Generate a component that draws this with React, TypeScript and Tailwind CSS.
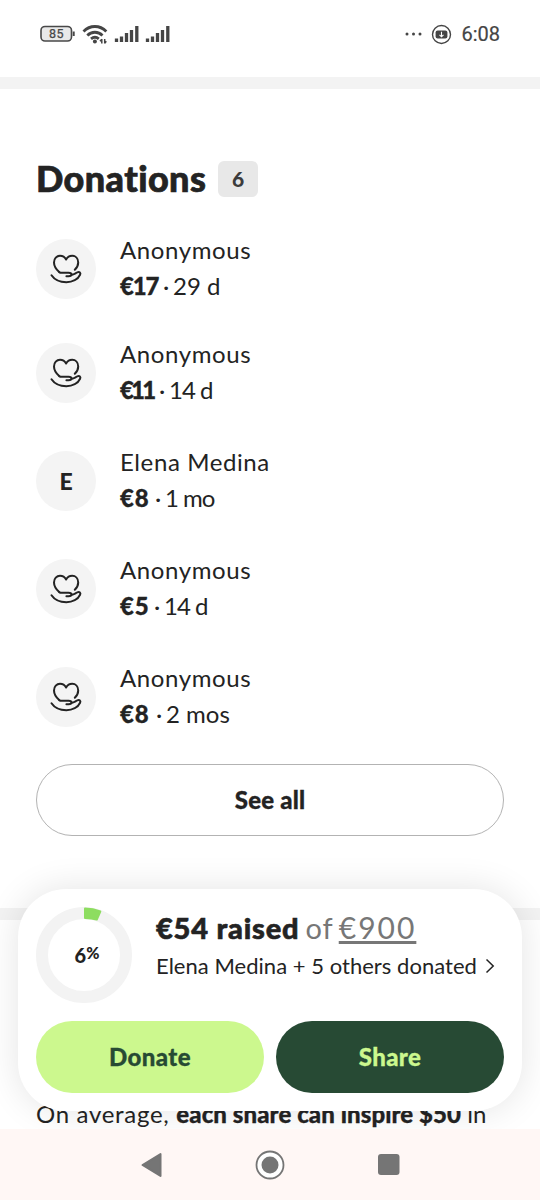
import type { ReactNode } from 'react';

function HeartHand() {
  return (
    <svg width="34" height="34" viewBox="0 0 34 34" fill="none" stroke="#232323" strokeWidth="2" strokeLinecap="round" strokeLinejoin="round">
      <path d="M10.4 20.2C7 17.2 5 13.8 5 10.4C5 6.5 7.700 3.800 11 3.800C13.700 3.800 15.800 5.100 17.100 7.500C18.400 5.100 20.500 3.800 23.200 3.800C26.600 3.800 29.200 6.500 29.200 10.400C29.200 13 28 15.600 25.800 17.800" />
      <path d="M10.400 20.200C11.300 21 12.500 20.800 14 20.800H19.500C21.400 20.800 22.500 21.200 22.500 22.500C22.500 23.900 21.300 24.300 19.500 24.300H17.400" />
      <path d="M22.800 22.800C24.800 22.500 26.500 21.200 28.300 20.400C30.500 19.300 32 20.900 31.100 22.800C29 27.300 23.500 30.200 17.400 30.200C11 30.200 5.300 27.500 2.500 23.300" />
    </svg>
  );
}

type DonationProps = { name: string; amount: string; when: string; initial?: string; amountClass: string; whenClass?: string };

function Donation({ name, amount, when, initial, amountClass, whenClass = '' }: DonationProps) {
  return (
    <li className="flex h-[72px] items-center gap-6">
      <div className="flex size-[60px] items-center justify-center rounded-full bg-[#f4f4f4] text-[23px] font-black">
        {initial ?? <HeartHand />}
      </div>
      <div className="-mt-0.5 text-2xl leading-9 whitespace-nowrap">
        <div className="tracking-[0.6px]">{name}</div>
        <div className="flex">
          <b className={`font-black [-webkit-text-stroke:0.3px] ${amountClass}`}>{amount}</b>
          <span className="w-[14px] text-center">·</span>
          <span className={whenClass}>{when}</span>
        </div>
      </div>
    </li>
  );
}

function Signal() {
  return (
    <svg width="26" height="18" viewBox="0 0 26 18" stroke="#454545" strokeWidth="3.300">
      <path d="M2.500 17v-3.500M7.500 17v-5.500M12.500 17V8M17.500 17V5M22.800 17V1" />
    </svg>
  );
}

function StatusBar() {
  return (
    <header className="flex h-[77px] items-start justify-between pt-[22px] pr-10 pl-10 text-[#454545]">
      <div className="flex h-6 items-center">
        <svg width="36" height="18" viewBox="0 0 36 18">
          <rect x="1" y="1.500" width="30.500" height="14.500" rx="4" fill="#e9e9e9" stroke="#484848" strokeWidth="1.600" />
          <path d="M33.700 6.500v4.500" stroke="#484848" strokeWidth="2" />
          <text x="16.500" y="13.300" textAnchor="middle" fontSize="12.500" fill="#484848" stroke="#484848" strokeWidth=".25" fontFamily="Roboto, sans-serif" letterSpacing=".5">85</text>
        </svg>
        <svg className="ml-1.5" width="26" height="22" viewBox="0 0 26 22" fill="none" stroke="#454545" strokeWidth="2.800">
          <path d="M1.500 8.500C8 1.800 17.800 1.800 24.300 8.500M5.300 12.400C9.600 8.200 16.200 8.200 20.500 12.400M9 15.900C11.400 13.900 14.500 13.900 16.800 15.900" />
          <circle cx="12.900" cy="18.500" r="2" fill="#454545" stroke="none" />
          <path d="M19.800 20.500v-4.500M18 18.300l1.800-2M22.700 16v4.500M22.700 20.300l1.600-2" strokeWidth="1.500" />
        </svg>
        <span className="ml-1.5"><Signal /></span>
        <span className="ml-[5px]"><Signal /></span>
      </div>
      <div className="flex h-6 items-center">
        <svg width="18" height="6" viewBox="0 0 18 6" fill="#454545">
          <circle cx="2" cy="3" r="1.500" /><circle cx="8.500" cy="3" r="1.500" /><circle cx="15" cy="3" r="1.500" />
        </svg>
        <svg className="ml-2" width="21" height="21" viewBox="0 0 21 21">
          <circle cx="10.500" cy="10.500" r="9" fill="none" stroke="#454545" strokeWidth="1.400" />
          <rect x="4.600" y="6.500" width="11.800" height="8" rx="2" fill="#454545" />
          <path d="M10.500 7.800v5M8.500 10.800l2 2 2-2" fill="none" stroke="#fff" strokeWidth="1.100" />
        </svg>
        <span className="ml-[9px] font-[Roboto,sans-serif] text-[20px] leading-6 [-webkit-text-stroke:0.2px]">6:08</span>
      </div>
    </header>
  );
}

function Pill({ className, children }: { className: string; children: ReactNode }) {
  return <button className={`flex h-[72px] flex-1 items-center justify-center rounded-full text-2xl font-black tracking-[0.4px] [-webkit-text-stroke:0.3px] ${className}`}>{children}</button>;
}

function ProgressRing() {
  return (
    <div className="relative flex size-24 items-center justify-center">
      <svg className="absolute inset-0" width="96" height="96" viewBox="0 0 96 96">
        <circle cx="48" cy="48" r="42" fill="none" stroke="#f3f3f3" strokeWidth="12" />
        <path d="M49 1.500C54.500 1.500 59.500 2.500 64.300 4.500L60.800 12.500C56.500 11.200 53 10.900 49 10.900Z" fill="#8ddd60" stroke="#8ddd60" strokeWidth="2" strokeLinejoin="round" />
      </svg>
      <span className="relative ml-1.5 flex items-start text-[20px] leading-6 font-black">6<span className="text-[16px] leading-[20px]">%</span></span>
    </div>
  );
}

export default function App() {
  return (
    <div className="relative flex h-[1200px] w-[540px] flex-col overflow-hidden bg-white font-[Lato,sans-serif] text-[#232323] [font-variant-ligatures:none]">
      <StatusBar />
      <div className="h-3 bg-[#f3f3f3]" />
      <main className="h-[819px] px-9 pt-[72px]">
        <div className="flex h-9 items-center gap-3">
          <h1 className="-mt-0.5 w-[170px] text-[36px] leading-9 font-black tracking-[0.4px] whitespace-nowrap [-webkit-text-stroke:0.7px]">Donations</h1>
          <span className="flex h-9 w-10 items-center justify-center rounded-md bg-[#e8e8e8] text-[21px] font-black text-[#3c3c3c]">6</span>
        </div>
        <ul className="mt-9 flex flex-col gap-9">
          <Donation name="Anonymous" amount="€17" when="29 d" amountClass="w-[39px] tracking-[-1.2px]" />
          <div className="-mt-1">
            <Donation name="Anonymous" amount="€11" when="14 d" amountClass="w-[35px] tracking-[-2.8px]" whenClass="tracking-[-1px]" />
          </div>
          <Donation name="Elena Medina" amount="€8" when="1 mo" initial="E" amountClass="w-[31px] tracking-[0.9px]" whenClass="tracking-[-1px]" />
          <Donation name="Anonymous" amount="€5" when="14 d" amountClass="w-[30px] tracking-[0.9px]" whenClass="tracking-[-1px]" />
          <Donation name="Anonymous" amount="€8" when="2 mos" amountClass="w-[32px] tracking-[0.9px]" />
        </ul>
        <button className="mt-[31px] flex h-[72px] w-full items-center justify-center rounded-full border-[1.5px] border-[#b3b3b3] text-2xl font-black tracking-[0.2px] [-webkit-text-stroke:0.3px]">See all</button>
      </main>
      <div className="h-3 shrink-0 bg-[#f3f3f3]" />
      <section className="flex h-[209px] shrink-0 items-end px-9 pb-px">
        <p className="text-2xl leading-7 whitespace-nowrap"><span className="tracking-[0.7px]">On average, </span><b className="font-black tracking-[0.08px] [-webkit-text-stroke:0.3px]">each share can inspire $50</b> in</p>
      </section>
      <nav className="relative z-10 flex h-[71px] shrink-0 items-center justify-between bg-[#fff7f5] pr-[140px] pl-[140px]">
        <svg width="22" height="26" viewBox="0 0 22 26"><path d="M2.500 13L20.500 2V24Z" fill="#757575" stroke="#757575" strokeWidth="2" strokeLinejoin="round" /></svg>
        <svg width="30" height="30" viewBox="0 0 30 30"><circle cx="15" cy="15" r="13.500" fill="#fff" stroke="#757575" strokeWidth="1.800" /><circle cx="15" cy="15" r="8.500" fill="#757575" /></svg>
        <svg width="22" height="22" viewBox="0 0 22 22"><rect width="21.500" height="21" rx="3" fill="#757575" /></svg>
      </nav>
      <aside className="absolute top-[889px] left-[18px] flex h-[222px] w-[504px] flex-col rounded-[48px] bg-white px-[18px] pt-[18px] shadow-[0_0_36px_rgba(0,0,0,0.11)]">
        <div className="flex gap-6">
          <ProgressRing />
          <div className="flex flex-col whitespace-nowrap">
            <div className="mt-[2px] h-9 text-[29px] leading-9"><b className="font-black tracking-[0.8px] [-webkit-text-stroke:0.6px]">€54 raised</b><span className="text-[#777]"><span className="ml-[6px] tracking-[1px]">of</span><span className="ml-[5px] text-[30px] tracking-[2px] underline decoration-[2.500px] underline-offset-[2px] [text-decoration-skip-ink:none]">€900</span></span></div>
            <div className="mt-[3px] flex items-center text-[22px] leading-9 tracking-[0.03px]">Elena Medina + 5 others donated
              <svg className="ml-2" width="10" height="16" viewBox="0 0 10 16" fill="none" stroke="#232323" strokeWidth="1.500"><path d="M1.500 1.500L8.200 8L1.500 14.500" /></svg>
            </div>
          </div>
        </div>
        <div className="mt-[18px] flex gap-3">
          <Pill className="bg-[#ccf88e] text-[#274a34]">Donate</Pill>
          <Pill className="bg-[#274a34] text-[#ccf88e]">Share</Pill>
        </div>
      </aside>
    </div>
  );
}
